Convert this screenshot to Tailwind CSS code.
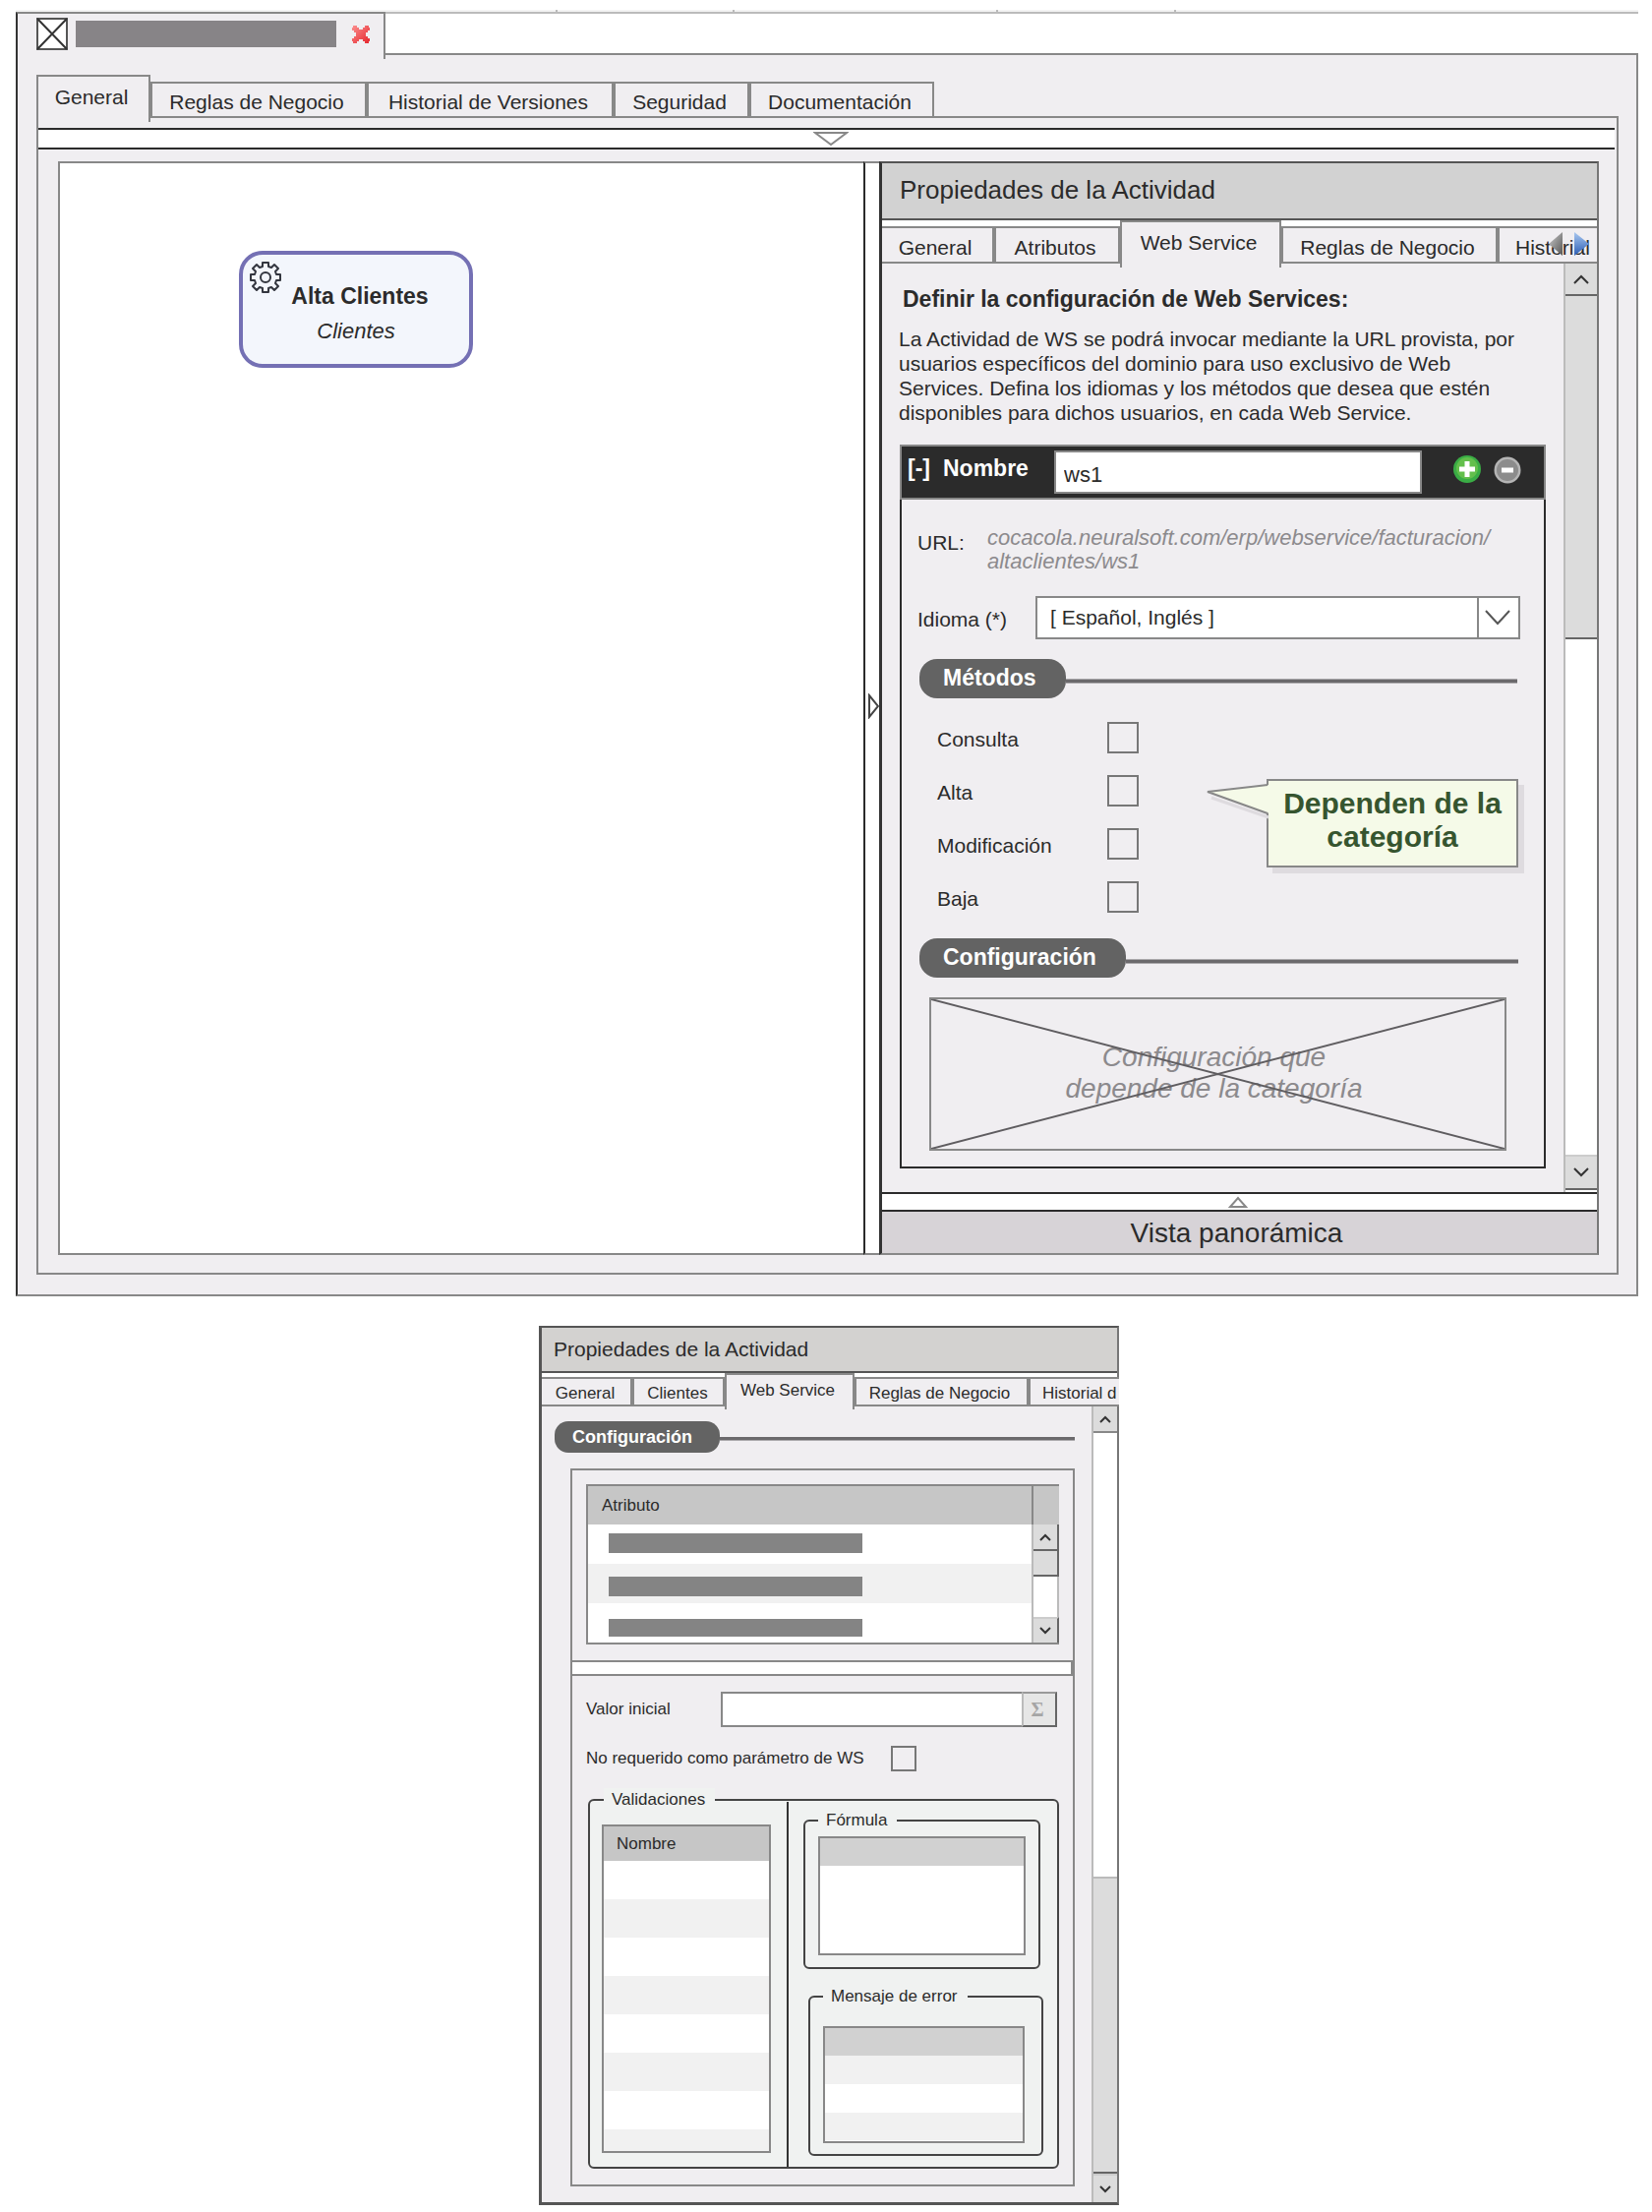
<!DOCTYPE html>
<html lang="es">
<head>
<meta charset="utf-8">
<title>Propiedades de la Actividad</title>
<script src="https://cdn.jsdelivr.net/npm/@tailwindcss/browser@4"></script>
</head>
<body class="bg-white font-['Liberation_Sans',Arial,sans-serif] text-[21px] text-[#2b2b2b]">

<main class="pt-[10px] pl-4 pr-[14px]">
  <!-- Remains of the toolbar above the document tabs -->
  <div class="flex h-[2px] bg-[#f4f4f4]">
    <div class="w-[551px] border-r-2 border-[#bbb]"></div>
    <div class="w-[180px] border-r-2 border-[#bbb]"></div>
    <div class="w-[268px] border-r-2 border-[#bbb]"></div>
    <div class="w-[181px] border-r-2 border-[#bbb]"></div>
  </div>

  <!-- Document tab -->
  <div class="flex h-11">
    <div class="relative -mb-1 flex h-12 w-[376px] items-center border-t-2 border-l-2 border-r-2 border-t-[#888] border-r-[#888] border-l-[#333] bg-[#f0eef1] pb-[5px] pl-[19px]">
      <svg class="h-[33px] w-8" viewBox="0 0 32 33" fill="none" stroke="#333"><rect x="1" y="1" width="30" height="31" fill="#fff" stroke-width="2" stroke="#555"/><path d="M1 1 31 32M31 1 1 32" stroke-width="2"/></svg>
      <div class="ml-2 h-[27px] w-[265px] bg-[#878487]"></div>
      <button class="ml-[15px]" aria-label="Cerrar"><svg class="block h-5 w-5" viewBox="0 0 20 20"><defs><linearGradient id="r" x1="0" y1="0" x2="1" y2="1"><stop offset="0" stop-color="#fb8f8f"/><stop offset="1" stop-color="#e5252c"/></linearGradient></defs><path d="M2 1H6V3H8V5H12V3H14V1H18V3H19V6H17V8H15V12H17V14H19V17H18V19H14V17H12V15H8V17H6V19H2V17H1V14H3V12H5V8H3V6H1V3H2Z" fill="url(#r)"/></svg></button>
    </div>
    <div class="flex-1 border-t-2 border-b-2 border-t-[#bbb] border-b-[#888]"></div>
  </div>

  <!-- Document window -->
  <section class="border-r-2 border-b-2 border-l-2 border-r-[#888] border-b-[#888] border-l-[#333] bg-[#f0eef1] pt-5 pr-[18px] pb-5 pl-[19px]">
    <nav class="flex h-11">
      <button class="relative -mb-1 h-12 w-[116px] border-2 border-b-0 border-[#888] bg-[#f0eef1] pr-1 pb-1">General</button>
      <button class="mt-[7px] w-[220px] border-2 border-[#888] pt-[3px] pr-1">Reglas de Negocio</button>
      <button class="mt-[7px] w-[251px] border-2 border-[#888] pt-[3px] pr-1">Historial de Versiones</button>
      <button class="mt-[7px] w-[138px] border-2 border-[#888] pt-[3px] pr-1">Seguridad</button>
      <button class="mt-[7px] w-[188px] border-2 border-[#888] pt-[3px] pr-1">Documentación</button>
      <div class="flex-1 border-b-2 border-[#888]"></div>
    </nav>

    <div class="border-r-2 border-b-2 border-l-2 border-[#888] pt-[10px] pb-[18px]">
      <div class="mr-[2px] flex h-[22px] items-center justify-center border-y-2 border-[#2b2b2b] bg-white pl-2">
        <svg class="h-[15px] w-9" viewBox="0 0 36 15" fill="none" stroke="#888" stroke-width="2"><path d="M2 1H34L18 13Z"/></svg>
      </div>

      <div class="mt-3 mr-[18px] ml-5 flex">
        <!-- Diagram canvas -->
        <div class="min-w-0 flex-1 border-2 border-r-0 border-[#888] bg-white pt-[89px] pl-[182px]">
          <div class="relative flex h-[119px] w-[238px] flex-col items-center rounded-[24px] border-4 border-[#7470b4] bg-[#f3f6fc] pt-7">
            <svg class="absolute top-[6px] left-[6px] h-[34px] w-[34px]" viewBox="-17 -17 34 34" fill="none" stroke="#33363f" stroke-width="2" stroke-linejoin="round"><path d="M-3-15H3V-11L6-10 9-13 13-9 10-6 11-3H15V3H11L10 6 13 9 9 13 6 10 3 11V15H-3V11L-6 10-9 13-13 9-10 6-11 3H-15V-3H-11L-10-6-13-9-9-13-6-10-3-11Z"/><circle r="5"/></svg>
            <div class="pl-2 text-[23px] leading-7 font-bold">Alta Clientes</div>
            <div class="mt-2 text-[22px] leading-7 italic">Clientes</div>
          </div>
        </div>
        <div class="flex w-4 items-center border-t-2 border-b-2 border-l-2 border-t-[#888] border-b-[#888] border-l-[#2b2b2b] bg-white pb-1 pl-[3px]">
          <svg class="h-[26px] w-[11px]" viewBox="0 0 11 26" fill="none" stroke="#444" stroke-width="2"><path d="M1 2V24L10 13Z"/></svg>
        </div>

        <!-- Activity properties -->
        <aside class="w-[732px] border-t-2 border-r-2 border-b-2 border-l-3 border-t-[#555] border-r-[#777] border-b-[#888] border-l-[#333]">
          <h2 class="flex h-[58px] items-center border-b-2 border-[#555] bg-[#d2d2d2] pb-[2px] pl-[18px] text-[26px]">Propiedades de la Actividad</h2>
          <nav class="relative flex h-11 bg-white">
            <button class="mt-[6px] w-[114px] border-2 border-l-0 border-[#888] bg-[#f0eef1] pt-1 pr-1">General</button>
            <button class="mt-[6px] w-[128px] border-2 border-[#888] bg-[#f0eef1] pt-1 pr-1">Atributos</button>
            <button class="relative -mb-1 h-12 w-[164px] border-x-2 border-t-2 border-[#888] bg-[#f0eef1] pr-1 pb-1">Web Service</button>
            <button class="mt-[6px] w-[220px] border-2 border-[#888] bg-[#f0eef1] pt-1 pr-1">Reglas de Negocio</button>
            <button class="mt-[6px] flex-1 overflow-hidden border-2 border-r-0 border-[#888] bg-[#f0eef1] pt-1 pl-4 text-left">Historial</button>
            <div class="absolute top-3 right-2 flex gap-3">
              <button aria-label="Anterior"><svg class="block h-6 w-[14px]" viewBox="0 0 14 24"><defs><linearGradient id="g" x1="0" y1="0" x2="1" y2="1"><stop offset="0" stop-color="#ccc"/><stop offset="1" stop-color="#555"/></linearGradient></defs><path d="M14 0V24L0 12Z" fill="url(#g)"/></svg></button>
              <button aria-label="Siguiente"><svg class="block h-6 w-[15px]" viewBox="0 0 15 24"><defs><linearGradient id="b" x1="0" y1="0" x2="0" y2="1"><stop offset="0" stop-color="#a9c8f0"/><stop offset="1" stop-color="#2b5db5"/></linearGradient></defs><path d="M0 0V24L15 12Z" fill="url(#b)"/></svg></button>
            </div>
          </nav>

          <div class="flex">
            <div class="min-w-0 flex-1 pt-[22px] pr-[18px] pb-6 pl-[18px]">
              <h3 class="pl-[3px] text-[23px] leading-7 font-bold">Definir la configuración de Web Services:</h3>
              <p class="mt-[14px] mr-3 -ml-px leading-[25px]">La Actividad de WS se podrá invocar mediante la URL provista, por usuarios específicos del dominio para uso exclusivo de Web Services. Defina los idiomas y los métodos que desea que estén disponibles para dichos usuarios, en cada Web Service.</p>

              <div class="mt-5">
                <div class="flex h-14 items-center border-2 border-[#888] bg-[#2b2b2b] pr-[23px] pl-[6px] text-[23px] font-bold text-white">
                  <button class="w-9 pb-2 text-left">[-]</button>
                  <label for="ws-name" class="w-[113px] pb-2">Nombre</label>
                  <input id="ws-name" value="ws1" class="h-11 min-w-0 flex-1 border-2 border-[#888] bg-white pt-[5px] pl-2 text-[22px] font-normal text-[#2b2b2b]">
                  <button class="ml-8 pb-[6px]" aria-label="Agregar"><svg class="block h-7 w-7" viewBox="0 0 28 28"><circle cx="14" cy="14" r="14" fill="#3aad45"/><circle cx="14" cy="13" r="11" fill="#63bf4c"/><path d="M14 6V22M6 14H22" stroke="#fff" stroke-width="5"/></svg></button>
                  <button class="ml-[13px] pb-1" aria-label="Quitar"><svg class="block h-7 w-7" viewBox="0 0 28 28"><circle cx="14" cy="14" r="13.500" fill="#b5b5b5"/><circle cx="14" cy="14" r="11" fill="#8c8c8c"/><path d="M8 14H20" stroke="#fff" stroke-width="5"/></svg></button>
                </div>

                <div class="relative border-x-2 border-b-2 border-[#2b2b2b] pt-[27px] pb-4">
                  <div class="flex pl-4">
                    <span class="w-[71px] pt-[5px] leading-6">URL:</span>
                    <span class="text-[22px] leading-6 text-[#8c8a8d] italic">cocacola.neuralsoft.com/erp/webservice/facturacion/<br>altaclientes/ws1</span>
                  </div>

                  <div class="mt-[23px] flex items-center pr-6 pl-4">
                    <label for="lang" class="w-[120px] pt-1">Idioma (*)</label>
                    <div class="relative flex-1">
                      <select id="lang" class="block h-11 w-full appearance-none border-2 border-[#888] bg-white pl-[13px]"><option>[ Español, Inglés ]</option></select>
                      <span class="pointer-events-none absolute inset-y-0 right-0 flex w-11 items-center justify-center border-l-2 border-[#888] pr-1"><svg class="h-4 w-[26px]" viewBox="0 0 26 16" fill="none" stroke="#555" stroke-width="2"><path d="M1 1 13 14 25 1"/></svg></span>
                    </div>
                  </div>

                  <div class="mt-5 mr-[27px] ml-[18px] flex items-center">
                    <h4 class="flex h-10 items-center rounded-[18px] bg-[#636363] pr-[30px] pb-[2px] pl-6 text-[23px] font-bold text-white">Métodos</h4>
                    <div class="mt-[5px] h-[5px] flex-1 border-y border-[#aaa8ab] bg-[#6b696c]"></div>
                  </div>

                  <div class="mt-6 flex flex-col gap-[22px] pl-9">
                    <div class="flex items-center"><label for="m1" class="w-[173px] pt-1 leading-7">Consulta</label><input id="m1" type="checkbox" class="h-8 w-8 appearance-none border-2 border-[#777]"></div>
                    <div class="flex items-center"><label for="m2" class="w-[173px] pt-1 leading-7">Alta</label><input id="m2" type="checkbox" class="h-8 w-8 appearance-none border-2 border-[#777]"></div>
                    <div class="flex items-center"><label for="m3" class="w-[173px] pt-1 leading-7">Modificación</label><input id="m3" type="checkbox" class="h-8 w-8 appearance-none border-2 border-[#777]"></div>
                    <div class="flex items-center"><label for="m4" class="w-[173px] pt-1 leading-7">Baja</label><input id="m4" type="checkbox" class="h-8 w-8 appearance-none border-2 border-[#777]"></div>
                  </div>

                  <!-- Callout over the method list -->
                  <div class="absolute top-[284px] right-[26px] flex h-[90px] w-[256px] flex-col items-center border-2 border-[#888] bg-[#f5fae8] pt-[6px] text-center text-[30px] leading-[34px] font-bold text-[#36552f] shadow-[6px_6px_0_#dedbdf]">
                    <svg class="absolute top-[3px] -left-[64px] h-9 w-[65px]" viewBox="0 0 65 36"><path d="M6 14 64 34" stroke="#dedbdf" stroke-width="3"/><path d="M65 1 2 8 65 30Z" fill="#f5fae8"/><path d="M63 1 2 8 63 30" fill="none" stroke="#888" stroke-width="2"/></svg>
                    Dependen de la<br>categoría
                  </div>

                  <div class="mt-[26px] mr-[26px] ml-[18px] flex items-center">
                    <h4 class="flex h-10 items-center rounded-[18px] bg-[#636363] pr-[30px] pb-[2px] pl-6 text-[23px] font-bold text-white">Configuración</h4>
                    <div class="mt-[6px] h-[5px] flex-1 border-y border-[#aaa8ab] bg-[#6b696c]"></div>
                  </div>

                  <div class="relative mt-5 mr-[38px] ml-7 flex h-[156px] items-center justify-center border-2 border-[#888] text-center text-[28px] leading-8 text-[#8c8a8d] italic">
                    <span class="pr-2 pb-[2px]">Configuración que<br>depende de la categoría</span>
                    <svg class="absolute inset-0 h-full w-full" viewBox="0 0 584 152" preserveAspectRatio="none" stroke="#5f5d60" stroke-width="2"><path d="M0 0 584 152M584 0 0 152"/></svg>
                  </div>
                </div>
              </div>
            </div>

            <!-- Vertical scroll bar -->
            <div class="flex w-[34px] flex-col border-l-2 border-[#bbb] bg-white">
              <button class="flex h-[33px] items-center justify-center border-b-2 border-[#666] bg-[#dcdcdc]" aria-label="Subir"><svg class="h-[10px] w-4" viewBox="0 0 16 10" fill="none" stroke="#333" stroke-width="2"><path d="M1 9 8 2 15 9"/></svg></button>
              <div class="h-[349px] border-b-2 border-[#666] bg-[#dcdcdc]"></div>
              <div class="flex-1"></div>
              <button class="mb-[2px] flex h-9 items-center justify-center border-t-2 border-b-2 border-t-[#ccc] border-b-[#666] bg-[#dcdcdc]" aria-label="Bajar"><svg class="h-[10px] w-4" viewBox="0 0 16 10" fill="none" stroke="#333" stroke-width="2"><path d="M1 1 8 8 15 1"/></svg></button>
            </div>
          </div>

          <div class="flex h-5 items-center justify-center border-y-2 border-[#2b2b2b] bg-white pr-1"><svg class="h-3 w-5" viewBox="0 0 20 12" fill="none" stroke="#888" stroke-width="2"><path d="M2 11H18L10 2Z"/></svg></div>
          <div class="flex h-[42px] items-center justify-center bg-[#d7d3d7] pt-[2px] pr-[6px] text-[28px]">Vista panorámica</div>
        </aside>
      </div>
    </div>
  </section>
</main>

<!-- Scrolled-down state of the properties panel -->
<div class="mt-[30px] pb-[6px] pl-[6px]">
  <aside class="mx-auto w-[590px] border-t-2 border-r-2 border-b-3 border-l-3 border-t-[#555] border-r-[#777] border-b-[#555] border-l-[#555] bg-[#f0eef1] text-[17px]">
    <h2 class="flex h-[46px] items-center border-b-2 border-[#555] bg-[#d3d2d0] pl-3 text-[21px]">Propiedades de la Actividad</h2>
    <nav class="flex h-[34px] bg-white">
      <button class="mt-1 w-[92px] border-2 border-l-0 border-[#888] bg-[#f0eef1] pt-[2px] pr-[2px]">General</button>
      <button class="mt-1 w-[94px] border-2 border-[#888] bg-[#f0eef1] pt-[2px] pr-[2px]">Clientes</button>
      <button class="relative -mb-[3px] w-[132px] border-x-2 border-t-2 border-[#888] bg-[#f0eef1] pr-1 pb-1">Web Service</button>
      <button class="mt-1 w-[177px] border-2 border-[#888] bg-[#f0eef1] pt-[2px] pr-1">Reglas de Negocio</button>
      <button class="mt-1 -mr-[2px] flex-1 overflow-hidden border-2 border-r-0 border-[#888] bg-[#f0eef1] pt-[2px] pl-3 text-left whitespace-nowrap">Historial d</button>
    </nav>

    <div class="flex">
      <div class="min-w-0 flex-1 pt-[15px] pr-[17px] pb-4 pl-[13px]">
        <div class="flex items-center">
          <h4 class="flex h-8 items-center rounded-[14px] bg-[#636363] pr-7 pl-[18px] text-[18px] font-bold text-white">Configuración</h4>
          <div class="mt-1 h-1 flex-1 border-b border-[#aaa8ab] bg-[#6b696c]"></div>
        </div>

        <div class="mt-4 ml-4 border-2 border-[#888] pb-4">
          <div class="mt-[14px] mr-[14px] ml-[14px] flex border-2 border-r-0 border-[#888] bg-white">
            <table class="flex-1 border-collapse">
              <thead><tr class="h-[39px] bg-[#c6c6c6]"><th class="pl-[14px] text-left font-normal">Atributo</th></tr></thead>
              <tbody>
                <tr class="h-10"><td class="pt-[9px] pl-[21px] align-top"><div class="h-5 w-[258px] bg-[#848484]"></div></td></tr>
                <tr class="h-10 bg-[#f1f1f1]"><td class="pt-[13px] pl-[21px] align-top"><div class="h-5 w-[258px] bg-[#848484]"></div></td></tr>
                <tr class="h-10"><td class="pt-4 pl-[21px] align-top"><div class="h-[18px] w-[258px] bg-[#848484]"></div></td></tr>
              </tbody>
            </table>
            <div class="flex w-7 flex-col border-l-2 border-[#bbb]">
              <div class="-ml-[2px] h-[39px] border-l-2 border-[#888] bg-[#c6c6c6]"></div>
              <button class="flex h-[27px] items-center justify-center border-r-2 border-b-2 border-[#666] bg-[#dcdcdc]" aria-label="Subir"><svg class="h-2 w-3" viewBox="0 0 12 8" fill="none" stroke="#333" stroke-width="2"><path d="M1 7 6 2 11 7"/></svg></button>
              <div class="h-[26px] border-r-2 border-b-2 border-[#666] bg-[#dcdcdc]"></div>
              <div class="flex-1 border-r-2 border-[#bbb]"></div>
              <button class="flex h-[26px] items-center justify-center border-t-2 border-r-2 border-t-[#ccc] border-r-[#666] bg-[#dcdcdc]" aria-label="Bajar"><svg class="h-2 w-3" viewBox="0 0 12 8" fill="none" stroke="#333" stroke-width="2"><path d="M1 1 6 6 11 1"/></svg></button>
            </div>
          </div>

          <div class="mt-4 h-4 border-y-2 border-r-2 border-[#888] bg-white"></div>

          <div class="mt-4 mr-4 ml-[14px] flex items-center">
            <label for="initial" class="w-[137px]">Valor inicial</label>
            <input id="initial" class="h-9 min-w-0 flex-1 border-2 border-r-0 border-[#888] bg-white px-2">
            <button class="h-9 w-9 border-2 border-t-[#999] border-r-[#666] border-b-[#666] border-l-[#bbb] bg-[#e6e6e6] pr-1 font-['Liberation_Serif',serif] text-[20px] leading-8 font-bold text-[#a5a5a5]" aria-label="Fórmula">Σ</button>
          </div>

          <div class="mt-[19px] ml-[14px] flex items-center">
            <label for="notreq" class="w-[310px]">No requerido como parámetro de WS</label>
            <input id="notreq" type="checkbox" class="h-[26px] w-[26px] appearance-none border-2 border-[#777]">
          </div>

          <fieldset class="mt-[17px] mr-[14px] ml-4 rounded-[6px] border-2 border-[#444] bg-[#f0f2f1]">
            <legend class="ml-[14px] bg-[#f0f2f1] pr-[10px] pl-2 leading-6">Validaciones</legend>
            <div class="flex">
              <div class="w-[200px] pt-[13px] pr-4 pb-[14px] pl-3">
                <table class="w-full border-2 border-[#888]">
                  <thead><tr class="h-9 bg-[#c6c6c6]"><th class="pl-[13px] text-left font-normal">Nombre</th></tr></thead>
                  <tbody>
                    <tr class="h-[39px] bg-white"><td></td></tr>
                    <tr class="h-[39px] bg-[#f1f1f1]"><td></td></tr>
                    <tr class="h-[39px] bg-white"><td></td></tr>
                    <tr class="h-[39px] bg-[#f1f1f1]"><td></td></tr>
                    <tr class="h-[39px] bg-white"><td></td></tr>
                    <tr class="h-[39px] bg-[#f1f1f1]"><td></td></tr>
                    <tr class="h-[39px] bg-white"><td></td></tr>
                    <tr class="h-[23px] bg-[#f1f1f1]"><td></td></tr>
                  </tbody>
                </table>
              </div>
              <div class="-mt-[10px] w-[2px] bg-[#333]"></div>
              <div class="flex-1 pr-[14px] pl-[15px]">
                <fieldset class="mr-[3px] rounded-[6px] border-2 border-[#444] pr-[13px] pb-3 pl-[13px]">
                  <legend class="pr-[10px] pl-2 leading-[18px]">Fórmula</legend>
                  <div class="mt-[7px] h-[121px] border-2 border-[#888] bg-white"><div class="h-7 bg-[#d1d1d1]"></div></div>
                </fieldset>
                <fieldset class="mt-[19px] ml-[5px] rounded-[6px] border-2 border-[#444] pr-[17px] pb-[11px] pl-[13px]">
                  <legend class="pr-[10px] pl-2 leading-[18px]">Mensaje de error</legend>
                  <div class="mt-[21px] h-[119px] border-2 border-[#888] bg-white">
                    <div class="h-7 bg-[#d1d1d1]"></div>
                    <div class="h-[29px] bg-[#f1f1f1]"></div>
                    <div class="mt-[29px] h-7 bg-[#f1f1f1]"></div>
                  </div>
                </fieldset>
              </div>
            </div>
          </fieldset>
        </div>
      </div>

      <div class="flex w-[26px] flex-col border-l-2 border-[#bbb] bg-white">
        <button class="flex h-[27px] items-center justify-center border-b-2 border-[#888] bg-[#dcdcdc]" aria-label="Subir"><svg class="h-2 w-3" viewBox="0 0 12 8" fill="none" stroke="#333" stroke-width="2"><path d="M1 7 6 2 11 7"/></svg></button>
        <div class="flex-1"></div>
        <div class="h-[302px] border-t-2 border-b-2 border-t-[#bbb] border-b-[#666] bg-[#dcdcdc]"></div>
        <button class="flex h-[29px] items-center justify-center border-t-2 border-t-[#ccc] bg-[#dcdcdc]" aria-label="Bajar"><svg class="h-2 w-3" viewBox="0 0 12 8" fill="none" stroke="#333" stroke-width="2"><path d="M1 1 6 6 11 1"/></svg></button>
      </div>
    </div>
  </aside>
</div>
</body>
</html>
